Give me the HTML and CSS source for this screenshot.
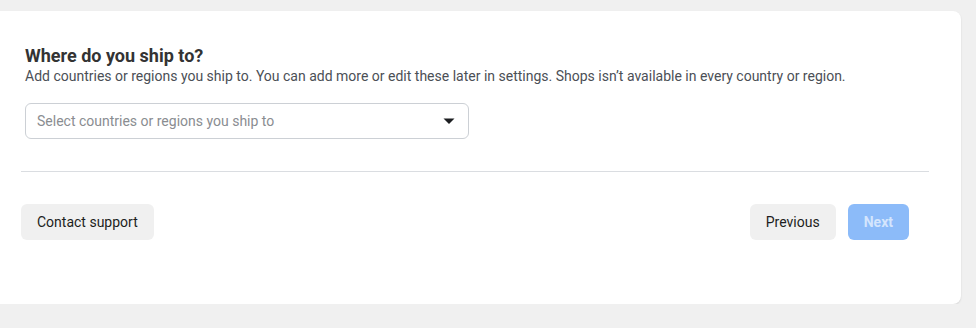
FILE: index.html
```html
<!DOCTYPE html>
<html lang="en">
<head>
  <meta charset="UTF-8">
  <title>Shipping</title>
  <link rel="stylesheet" href="styles.css">
</head>
<body>

  <div class="card">
    <div class="section">
      <h2 class="title">Where do you ship to?</h2>
      <p class="subtitle">Add countries or regions you ship to. You can add more or edit these later in settings. Shops isn’t available in every country or region.</p>

      <div class="select">
        <span class="placeholder">Select countries or regions you ship to</span>
        <svg class="caret" width="12" height="8" viewBox="0 0 12 8">
          <path d="M0.5 1.5 L11.5 1.5 L6 7 Z" fill="#1c1e21"/>
        </svg>
      </div>
    </div>

    <div class="divider"></div>

    <div class="footer">
      <button class="btn">Contact support</button>
      <div class="nav">
        <button class="btn">Previous</button>
        <button class="btn btn-primary" disabled>Next</button>
      </div>
    </div>
  </div>

</body>
</html>
```

FILE: styles.css
```css
body {
  margin: 0;
  padding: 11px 0 0 0;
  background: #f0f0f0;
  font-family: Roboto, "Liberation Sans", Arial, sans-serif;
  color: #1c1e21;
}
.card {
  width: 961px;
  height: 293px;
  box-sizing: border-box;
  background: #fff;
  border-radius: 0 8px 8px 0;
  box-shadow: 0 1px 2px rgba(0, 0, 0, 0.12);
}
.section {
  padding: 34px 25px 32px 25px;
}
.title {
  margin: 0;
  font-size: 18px;
  line-height: 22px;
  font-weight: 700;
  color: #333;
}
.subtitle {
  margin: 0;
  font-size: 14px;
  line-height: 18px;
  color: #4b4f56;
}
.select {
  margin-top: 18px;
  width: 444px;
  height: 36px;
  box-sizing: border-box;
  border: 1px solid #ccd0d5;
  border-radius: 6px;
  display: flex;
  align-items: center;
  justify-content: space-between;
  padding: 0 13px 0 11px;
}
.placeholder {
  font-size: 14px;
  color: #8a8d91;
}
.caret {
  display: block;
}
.divider {
  height: 1px;
  background: #dadde1;
  margin: 0 32px 0 21px;
}
.footer {
  display: flex;
  justify-content: space-between;
  padding: 32px 52px 0 21px;
}
.nav {
  display: flex;
  gap: 12px;
}
.btn {
  height: 36px;
  padding: 0 16px;
  border: none;
  border-radius: 6px;
  background: #f0f0f0;
  font-family: inherit;
  font-size: 14px;
  color: #1c1e21;
  cursor: pointer;
}
.btn-primary {
  background: #8cbbf9;
  color: #d4e5fd;
  font-weight: 700;
  cursor: default;
}
```
